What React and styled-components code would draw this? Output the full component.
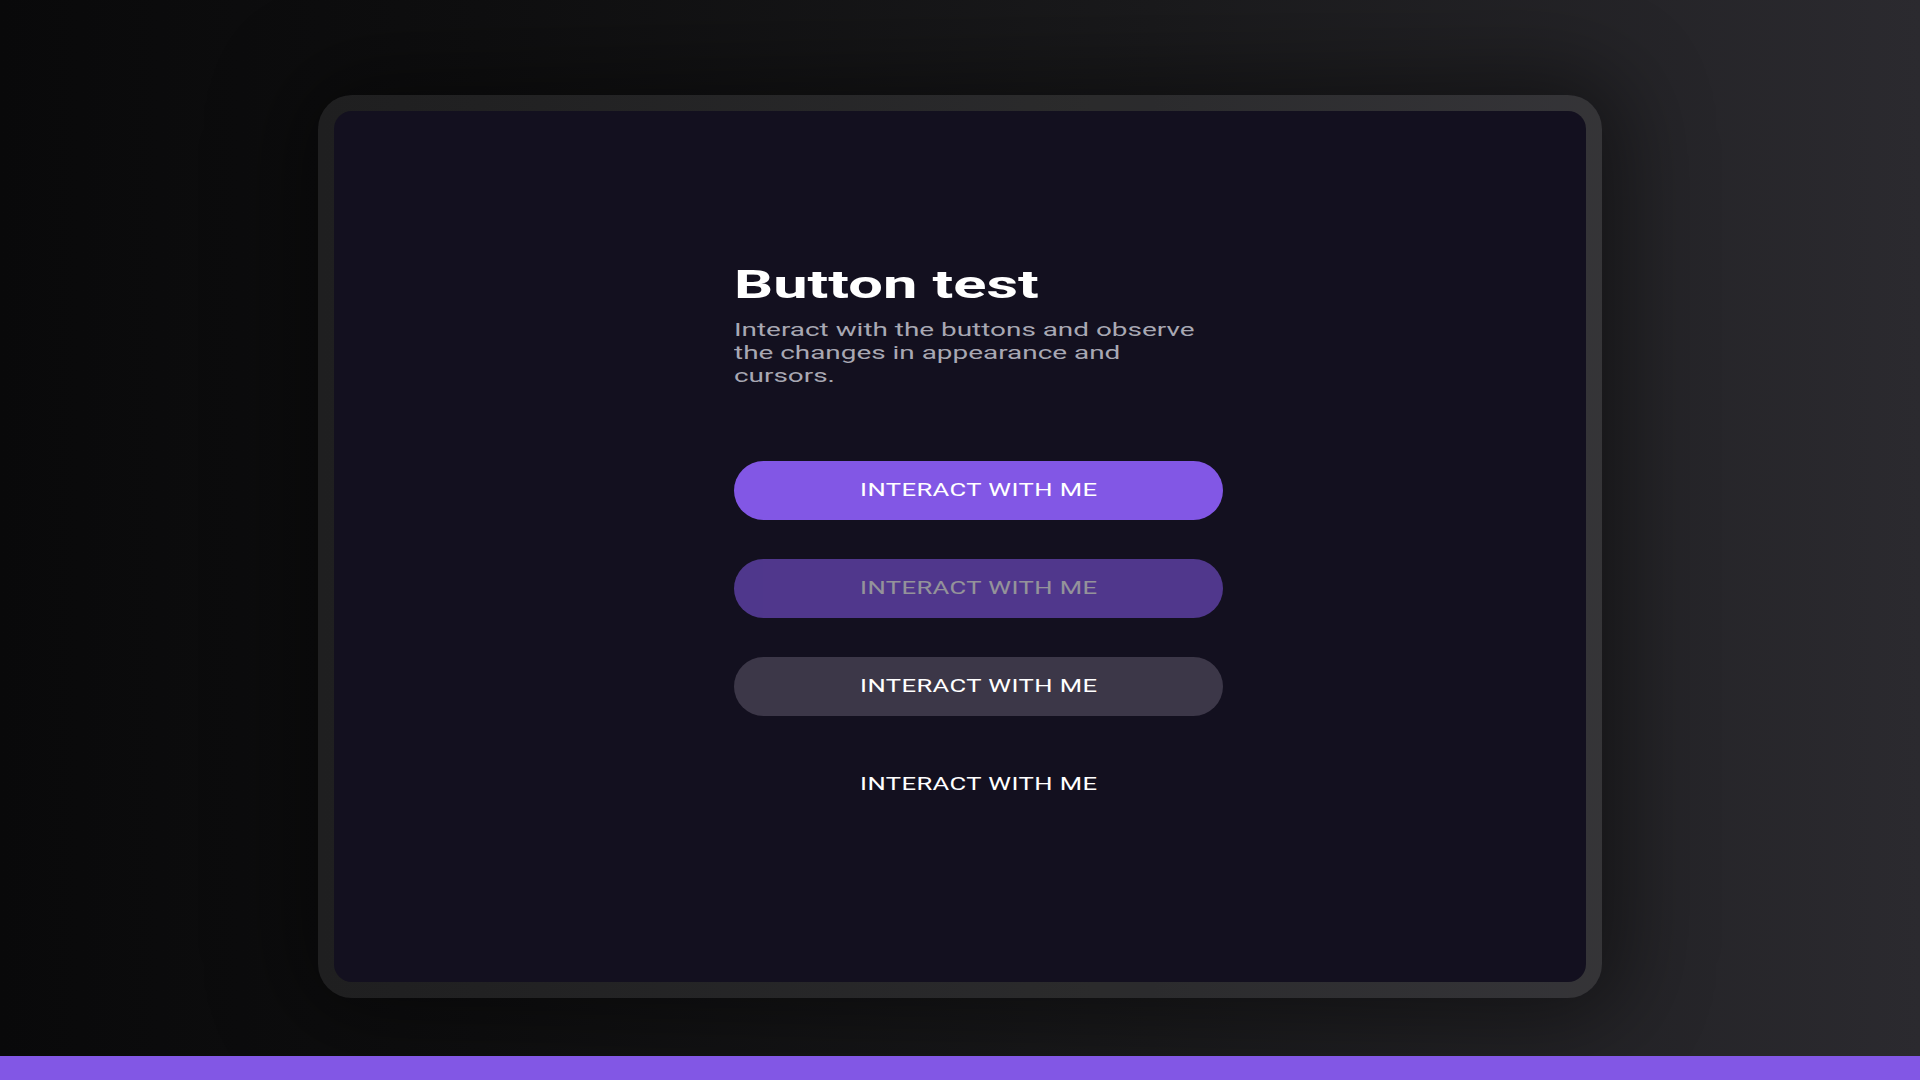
import React from "react";
import styled, { createGlobalStyle } from "styled-components";

const TITLE_STRETCH = 1.615;
const LEAD_STRETCH = 1.55;
const LABEL_STRETCH = 1.385;

const Global = createGlobalStyle`
  * { box-sizing: border-box; }
  html, body { margin: 0; padding: 0; }
  body {
    font-family: Roboto, "Liberation Sans", sans-serif;
    background: #0a0a0a;
  }
`;

const Page = styled.div`
  min-height: 100vh;
  display: flex;
  flex-direction: column;
  background: linear-gradient(90deg, #09090a 0%, #0f0f10 25%, #1a1a1c 60%, #2b2a2f 100%);
`;

const Stage = styled.main`
  flex: 1;
  display: flex;
  justify-content: center;
  align-items: flex-start;
  padding-top: 95px;
`;

const Frame = styled.div`
  width: 1284px;
  height: 903px;
  padding: 16px;
  border-radius: 34px;
  background: rgba(255, 255, 255, 0.08);
  box-shadow: 0 0 90px 20px rgba(0, 0, 0, 0.45);
  display: flex;
`;

const Screen = styled.section`
  flex: 1;
  border-radius: 18px;
  background: #13101f;
  padding: 152px 0 0 400px;
`;

const Column = styled.div`
  width: 489px;
  display: flex;
  flex-direction: column;
`;

const Title = styled.h1`
  margin: 0;
  font-size: 38px;
  line-height: 1.2;
  font-weight: 700;
  color: #ffffff;
  transform: scaleX(${TITLE_STRETCH});
  transform-origin: left center;
  white-space: nowrap;
`;

const Lead = styled.p`
  margin: 9px 0 0;
  width: ${474 / LEAD_STRETCH}px;
  font-size: 18px;
  line-height: 23.4px;
  font-weight: 400;
  color: #a8a8b3;
  transform: scaleX(${LEAD_STRETCH});
  transform-origin: left center;
`;

const Buttons = styled.div`
  margin-top: 73px;
  display: flex;
  flex-direction: column;
  gap: 39px;
`;

const variants = {
  primary: { bg: "#8257e5", fg: "#ffffff", opacity: 1 },
  disabled: { bg: "#8257e5", fg: "#ffffff", opacity: 0.55 },
  secondary: { bg: "#3c3748", fg: "#ffffff", opacity: 1 },
  ghost: { bg: "transparent", fg: "#ffffff", opacity: 1 },
};

const Button = styled.button`
  height: 59px;
  width: 100%;
  border: none;
  border-radius: 999px;
  background: ${(p) => variants[p.$variant].bg};
  opacity: ${(p) => variants[p.$variant].opacity};
  color: ${(p) => variants[p.$variant].fg};
  display: flex;
  align-items: center;
  justify-content: center;
  padding: 0;
  cursor: ${(p) => (p.$variant === "disabled" ? "not-allowed" : "pointer")};
  font-family: Roboto, "Liberation Sans", sans-serif;
`;

const Label = styled.span`
  display: inline-block;
  font-size: 18.5px;
  font-weight: 400;
  letter-spacing: 0.3px;
  transform: scaleX(${LABEL_STRETCH});
  white-space: nowrap;
`;

const Bar = styled.footer`
  height: 24px;
  background: #8257e5;
`;

export default function App() {
  return (
    <>
      <Global />
      <Page>
        <Stage>
          <Frame>
            <Screen>
              <Column>
                <Title>Button test</Title>
                <Lead>
                  Interact with the buttons and observe the changes in appearance and cursors.
                </Lead>
                <Buttons>
                  <Button $variant="primary"><Label>INTERACT WITH ME</Label></Button>
                  <Button $variant="disabled" disabled><Label>INTERACT WITH ME</Label></Button>
                  <Button $variant="secondary"><Label>INTERACT WITH ME</Label></Button>
                  <Button $variant="ghost"><Label>INTERACT WITH ME</Label></Button>
                </Buttons>
              </Column>
            </Screen>
          </Frame>
        </Stage>
        <Bar />
      </Page>
    </>
  );
}
